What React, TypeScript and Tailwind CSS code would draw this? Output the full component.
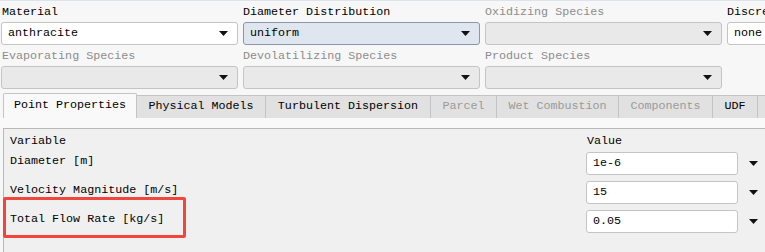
import React from "react";

const Arrow = () => (
  <svg width="9" height="5" viewBox="0 0 9 5" className="shrink-0">
    <path d="M0 0H9L4.5 5Z" fill="#111" />
  </svg>
);

type ComboProps = {
  value?: string;
  variant?: "normal" | "focus" | "disabled";
  className?: string;
};

function Combo({ value = "", variant = "normal", className = "" }: ComboProps) {
  const look =
    variant === "focus"
      ? "bg-[#dfe6ef] border-[#8a97a8]"
      : variant === "disabled"
      ? "bg-[#e9e9e9] border-[#c4c4c4]"
      : "bg-white border-[#c4c4c4]";
  return (
    <div
      className={
        "h-[23px] w-[237px] shrink-0 flex items-center justify-between pl-[6px] pr-[9px] border rounded-[3px] " +
        look +
        " " +
        className
      }>
      <span className="text-black">{value}</span>
      <Arrow />
    </div>
  );
}

const tabs = [
  { name: "Point Properties", w: "w-[134px]", active: true },
  { name: "Physical Models", w: "w-[129px]" },
  { name: "Turbulent Dispersion", w: "w-[165px]" },
  { name: "Parcel", w: "w-[66px]", disabled: true },
  { name: "Wet Combustion", w: "w-[122px]", disabled: true },
  { name: "Components", w: "w-[94px]", disabled: true },
  { name: "UDF", w: "w-[45px]" },
  { name: "", w: "w-[20px]" },
];

const rows = [
  { label: "Diameter [m]", value: "1e-6" },
  { label: "Velocity Magnitude [m/s]", value: "15" },
  { label: "Total Flow Rate [kg/s]", value: "0.05" },
];

export default function App() {
  return (
    <div className="w-[765px] h-[252px] overflow-hidden bg-[#f7f7f7] text-[11.7px] text-black font-['Liberation_Mono',monospace] relative">
      <div className="h-px bg-[#dde3ea]" />
      <div className="flex gap-[5px] pl-px">
        <div className="flex flex-col">
          <div className="h-[21px] pt-[3px] pl-px leading-[16px]">Material</div>
          <Combo value="anthracite" />
          <div className="h-[21px] pt-[3px] pl-px leading-[16px] text-[#8c8c8c]">Evaporating Species</div>
          <Combo variant="disabled" />
        </div>
        <div className="flex flex-col">
          <div className="h-[21px] pt-[3px] leading-[16px]">Diameter Distribution</div>
          <Combo value="uniform" variant="focus" />
          <div className="h-[21px] pt-[3px] leading-[16px] text-[#8c8c8c]">Devolatilizing Species</div>
          <Combo variant="disabled" />
        </div>
        <div className="flex flex-col">
          <div className="h-[21px] pt-[3px] leading-[16px] text-[#8c8c8c]">Oxidizing Species</div>
          <Combo variant="disabled" />
          <div className="h-[21px] pt-[3px] leading-[16px] text-[#8c8c8c]">Product Species</div>
          <Combo variant="disabled" />
        </div>
        <div className="flex flex-col">
          <div className="h-[21px] pt-[3px] leading-[16px] whitespace-nowrap">Discrete</div>
          <Combo value="none" />
        </div>
      </div>

      <div className="flex items-end h-[29px] pl-[3px] pt-[4px]">
        {tabs.map((t) => (
          <div
            key={t.name + t.w}
            className={
              "shrink-0 flex items-center justify-center border border-b-0 border-[#c4c4c4] " +
              t.w +
              (t.active
                ? " h-[25px] bg-[#f9f9f9] rounded-t-[2px]"
                : " h-[23px] bg-[#e1e1e1] border-l-0") +
              (t.disabled ? " text-[#9a9a9a]" : "")
            }>
            {t.name}
          </div>
        ))}
      </div>

      <div className="h-[10px] bg-[#f9f9f9]" />

      <div className="ml-[3px] h-[130px] border-t border-l border-[#b8b8b8] bg-[#f0f0f0] pl-[6px] pt-[4px]">
        <div className="flex h-[19px] leading-[16px]">
          <div className="w-[577px]">Variable</div>
          <div>Value</div>
        </div>
        {rows.map((r) => (
          <div key={r.label} className="flex h-[29px]">
            <div className="w-[576px] pt-px leading-[16px]">{r.label}</div>
            <div className="w-[152px] h-[23px] flex items-center pl-[6px] bg-white border border-[#c4c4c4] rounded-[3px]">
              {r.value}
            </div>
            <div className="h-[23px] flex items-center pl-[11px]">
              <Arrow />
            </div>
          </div>
        ))}
      </div>

      <div className="absolute left-[3px] top-[197px] w-[183px] h-[41px] border-[3px] border-[#f0463c] rounded-[2px]" />
    </div>
  );
}
